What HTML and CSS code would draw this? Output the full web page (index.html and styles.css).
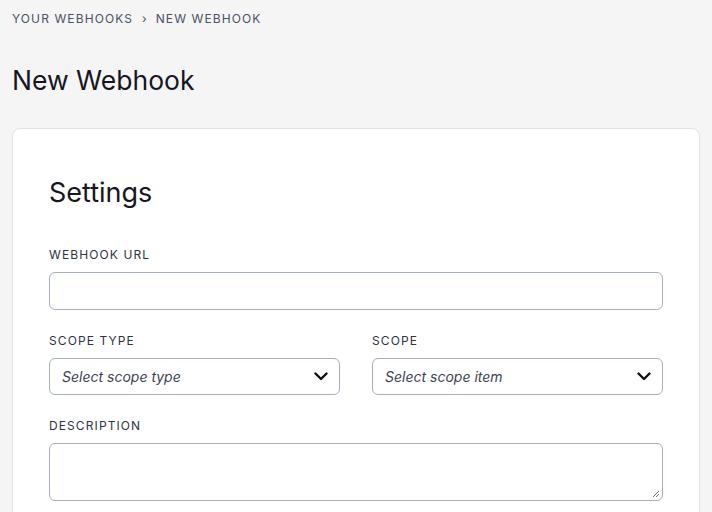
FILE: index.html
```html
<!DOCTYPE html>
<html>
<head>
<meta charset="utf-8">
<link rel="stylesheet" href="styles.css">
</head>
<body>
<div class="page">
  <nav class="crumbs">
    <span>Your Webhooks</span>
    <span class="sep">›</span>
    <span>New Webhook</span>
  </nav>
  <h1 class="title">New Webhook</h1>
  <section class="card">
    <h2 class="card-title">Settings</h2>
    <div class="field">
      <label class="label">Webhook URL</label>
      <div class="input"></div>
    </div>
    <div class="row">
      <div class="field">
        <label class="label">Scope Type</label>
        <div class="select">
          <span class="placeholder">Select scope type</span>
          <svg class="chev" width="14" height="9" viewBox="0 0 14 9"><path d="M1.5 1.5 L7 7 L12.5 1.5" fill="none" stroke="#111" stroke-width="2.4" stroke-linecap="round" stroke-linejoin="round"/></svg>
        </div>
      </div>
      <div class="field">
        <label class="label">Scope</label>
        <div class="select">
          <span class="placeholder">Select scope item</span>
          <svg class="chev" width="14" height="9" viewBox="0 0 14 9"><path d="M1.5 1.5 L7 7 L12.5 1.5" fill="none" stroke="#111" stroke-width="2.4" stroke-linecap="round" stroke-linejoin="round"/></svg>
        </div>
      </div>
    </div>
    <div class="field">
      <label class="label">Description</label>
      <div class="textarea">
        <svg class="grip" width="8" height="8" viewBox="0 0 8 8"><path d="M7 1 L1 7 M7 4 L4 7" stroke="#777" stroke-width="1" fill="none"/></svg>
      </div>
    </div>
  </section>
</div>
</body>
</html>
```

FILE: styles.css
```css
* { box-sizing: border-box; }
html, body { margin: 0; padding: 0; }
body {
  background: #f5f5f5;
  font-family: Inter, "Noto Sans", sans-serif;
  color: #1a1a2a;
}
.page {
  padding: 11px 12px 0 12px;
}
.crumbs {
  display: flex;
  gap: 9px;
  font-size: 12px;
  line-height: 15px;
  letter-spacing: 1.1px;
  text-transform: uppercase;
  color: #4a5066;
}
.crumbs .sep { letter-spacing: 0; }
.title {
  margin: 37px 0 0 0;
  font-size: 26.5px;
  line-height: 34px;
  font-weight: 400;
  color: #161622;
}
.card {
  margin-top: 31px;
  background: #fff;
  border: 1px solid #e2e2e4;
  border-radius: 8px;
  padding: 47px 36px 20px 36px;
}
.card-title {
  margin: 0 0 37px 0;
  font-size: 27px;
  line-height: 34px;
  font-weight: 400;
  color: #161622;
}
.field { display: flex; flex-direction: column; margin-bottom: 23px; }
.label {
  font-size: 12px;
  line-height: 15px;
  letter-spacing: 1.1px;
  text-transform: uppercase;
  color: #2d3345;
  margin-bottom: 10px;
}
.input, .select, .textarea {
  border: 1px solid #a5b0c4;
  border-radius: 6px;
  background: #fff;
}
.input { height: 38px; }
.row {
  display: grid;
  grid-template-columns: 1fr 1fr;
  gap: 32px;
}
.select {
  height: 37px;
  display: flex;
  align-items: center;
  justify-content: space-between;
  padding: 0 11px 0 12px;
}
.placeholder {
  font-style: italic;
  font-size: 14px;
  color: #3b4152;
}
.textarea {
  height: 58px;
  position: relative;
}
.grip { position: absolute; right: 2px; bottom: 2px; }
```
